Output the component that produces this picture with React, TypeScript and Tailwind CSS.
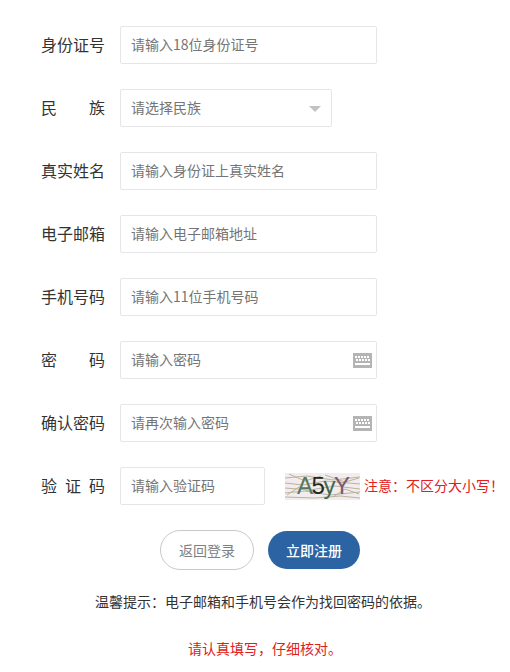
const font = "font-['Noto_Sans_CJK_SC','Noto_Sans',sans-serif]";

function Keyboard() {
  return (
    <svg width="19" height="15" viewBox="0 0 19 15" className="absolute left-[232px] top-[11px]">
      <rect width="19" height="15" fill="#b4b4b4" />
      <g fill="#fff">
        {[2, 5, 8, 11, 14].map((x) => (
          <rect key={x} x={x} y="3" width="2" height="2" />
        ))}
        {[3, 6, 9, 12, 15].map((x) => (
          <rect key={x} x={x} y="6" width="2" height="2" />
        ))}
        <rect x="2" y="10" width="15" height="2" />
      </g>
    </svg>
  );
}

function Label({ chars }: { chars: string[] }) {
  return (
    <div className="flex w-16 shrink-0 justify-between pb-[3px] text-base text-[#333]">
      {chars.map((c, i) => (
        <span key={i}>{c}</span>
      ))}
    </div>
  );
}

function Row({ chars, children }: { chars: string[]; children: React.ReactNode }) {
  return (
    <div className="flex h-[38px] items-center">
      <div className="w-[41px] shrink-0" />
      <Label chars={chars} />
      <div className="w-[15px] shrink-0" />
      {children}
    </div>
  );
}

function Field({ text, w = "w-[257px]", kb }: { text: string; w?: string; kb?: boolean }) {
  return (
    <div className={`relative flex h-[38px] items-center rounded-[2px] border border-[#e6e6e6] bg-white pb-[2px] pl-[10px] text-sm text-[#757575] ${w}`}>
      {text}
      {kb && <Keyboard />}
    </div>
  );
}

function Captcha() {
  const lines = [
    "M0 5 L22 3 L48 7 L75 4", "M0 10 L18 12 L40 8 L75 11", "M0 15 L25 17 L50 13 L75 16",
    "M0 20 L20 18 L45 22 L75 19", "M0 24 L30 25 L55 23 L75 25", "M4 1 L20 8 L36 3", "M40 2 L60 9 L74 5",
    "M2 22 L14 14 L30 21", "M48 24 L60 16 L74 21",
  ];
  return (
    <div className="relative ml-5 h-[27px] w-[75px] shrink-0 overflow-hidden bg-[#f3ecee]">
      <svg width="75" height="27" className="absolute left-0 top-0">
        {lines.map((d) => (
          <path key={d} d={d} stroke="#b9b39c" strokeWidth="1" fill="none" />
        ))}
      </svg>
      <div className="absolute left-[12px] top-0 flex h-[27px] items-center font-['Liberation_Sans',sans-serif] text-[24px] leading-none tracking-[-1.5px]">
        <span className="text-[#55775c]">A</span>
        <span className="text-[#22281f]">5</span>
        <span className="text-[#3c6a55]">y</span>
        <span className="text-[#7a5a70]">Y</span>
      </div>
    </div>
  );
}

export default function App() {
  return (
    <div className={`flex h-[672px] w-[510px] flex-col overflow-hidden bg-white pt-[26px] ${font}`}>
      <div className="flex flex-col gap-[25px]">
        <Row chars={["身", "份", "证", "号"]}>
          <Field text="请输入18位身份证号" />
        </Row>
        <Row chars={["民", "族"]}>
          <div className="relative flex h-[38px] w-[212px] items-center rounded-[2px] border border-[#e6e6e6] bg-white pb-[2px] pl-[10px] text-sm text-[#757575]">
            请选择民族
            <div className="absolute right-[10px] top-[16px] h-0 w-0 border-x-[6px] border-t-[6px] border-x-transparent border-t-[#c2c2c2]" />
          </div>
        </Row>
        <Row chars={["真", "实", "姓", "名"]}>
          <Field text="请输入身份证上真实姓名" />
        </Row>
        <Row chars={["电", "子", "邮", "箱"]}>
          <Field text="请输入电子邮箱地址" />
        </Row>
        <Row chars={["手", "机", "号", "码"]}>
          <Field text="请输入11位手机号码" />
        </Row>
        <Row chars={["密", "码"]}>
          <Field text="请输入密码" kb />
        </Row>
        <Row chars={["确", "认", "密", "码"]}>
          <Field text="请再次输入密码" kb />
        </Row>
        <Row chars={["验", "证", "码"]}>
          <Field text="请输入验证码" w="w-[145px]" />
          <Captcha />
          <span className="ml-1 whitespace-nowrap pb-[3px] text-sm text-[#e02020]">注意：不区分大小写！</span>
        </Row>
      </div>
      <div className="mt-[25px] flex items-center pl-[160px]">
        <div className="flex h-10 w-[94px] items-center justify-center rounded-[20px] border border-[#c9c9c9] bg-white pb-[1px] text-sm text-[#808080]">
          返回登录
        </div>
        <div className="ml-[14px] flex h-[38px] w-[92px] items-center justify-center rounded-[19px] bg-[#2b63a3] pb-[1px] text-sm font-medium text-white">
          立即注册
        </div>
      </div>
      <div className="mt-[21px] h-5 pl-[16px] text-center text-sm leading-5 text-[#333]">
        温馨提示：电子邮箱和手机号会作为找回密码的依据。
      </div>
      <div className="mt-[27px] h-5 pl-[20px] text-center text-sm leading-5 text-[#e02020]">
        请认真填写，仔细核对。
      </div>
    </div>
  );
}
